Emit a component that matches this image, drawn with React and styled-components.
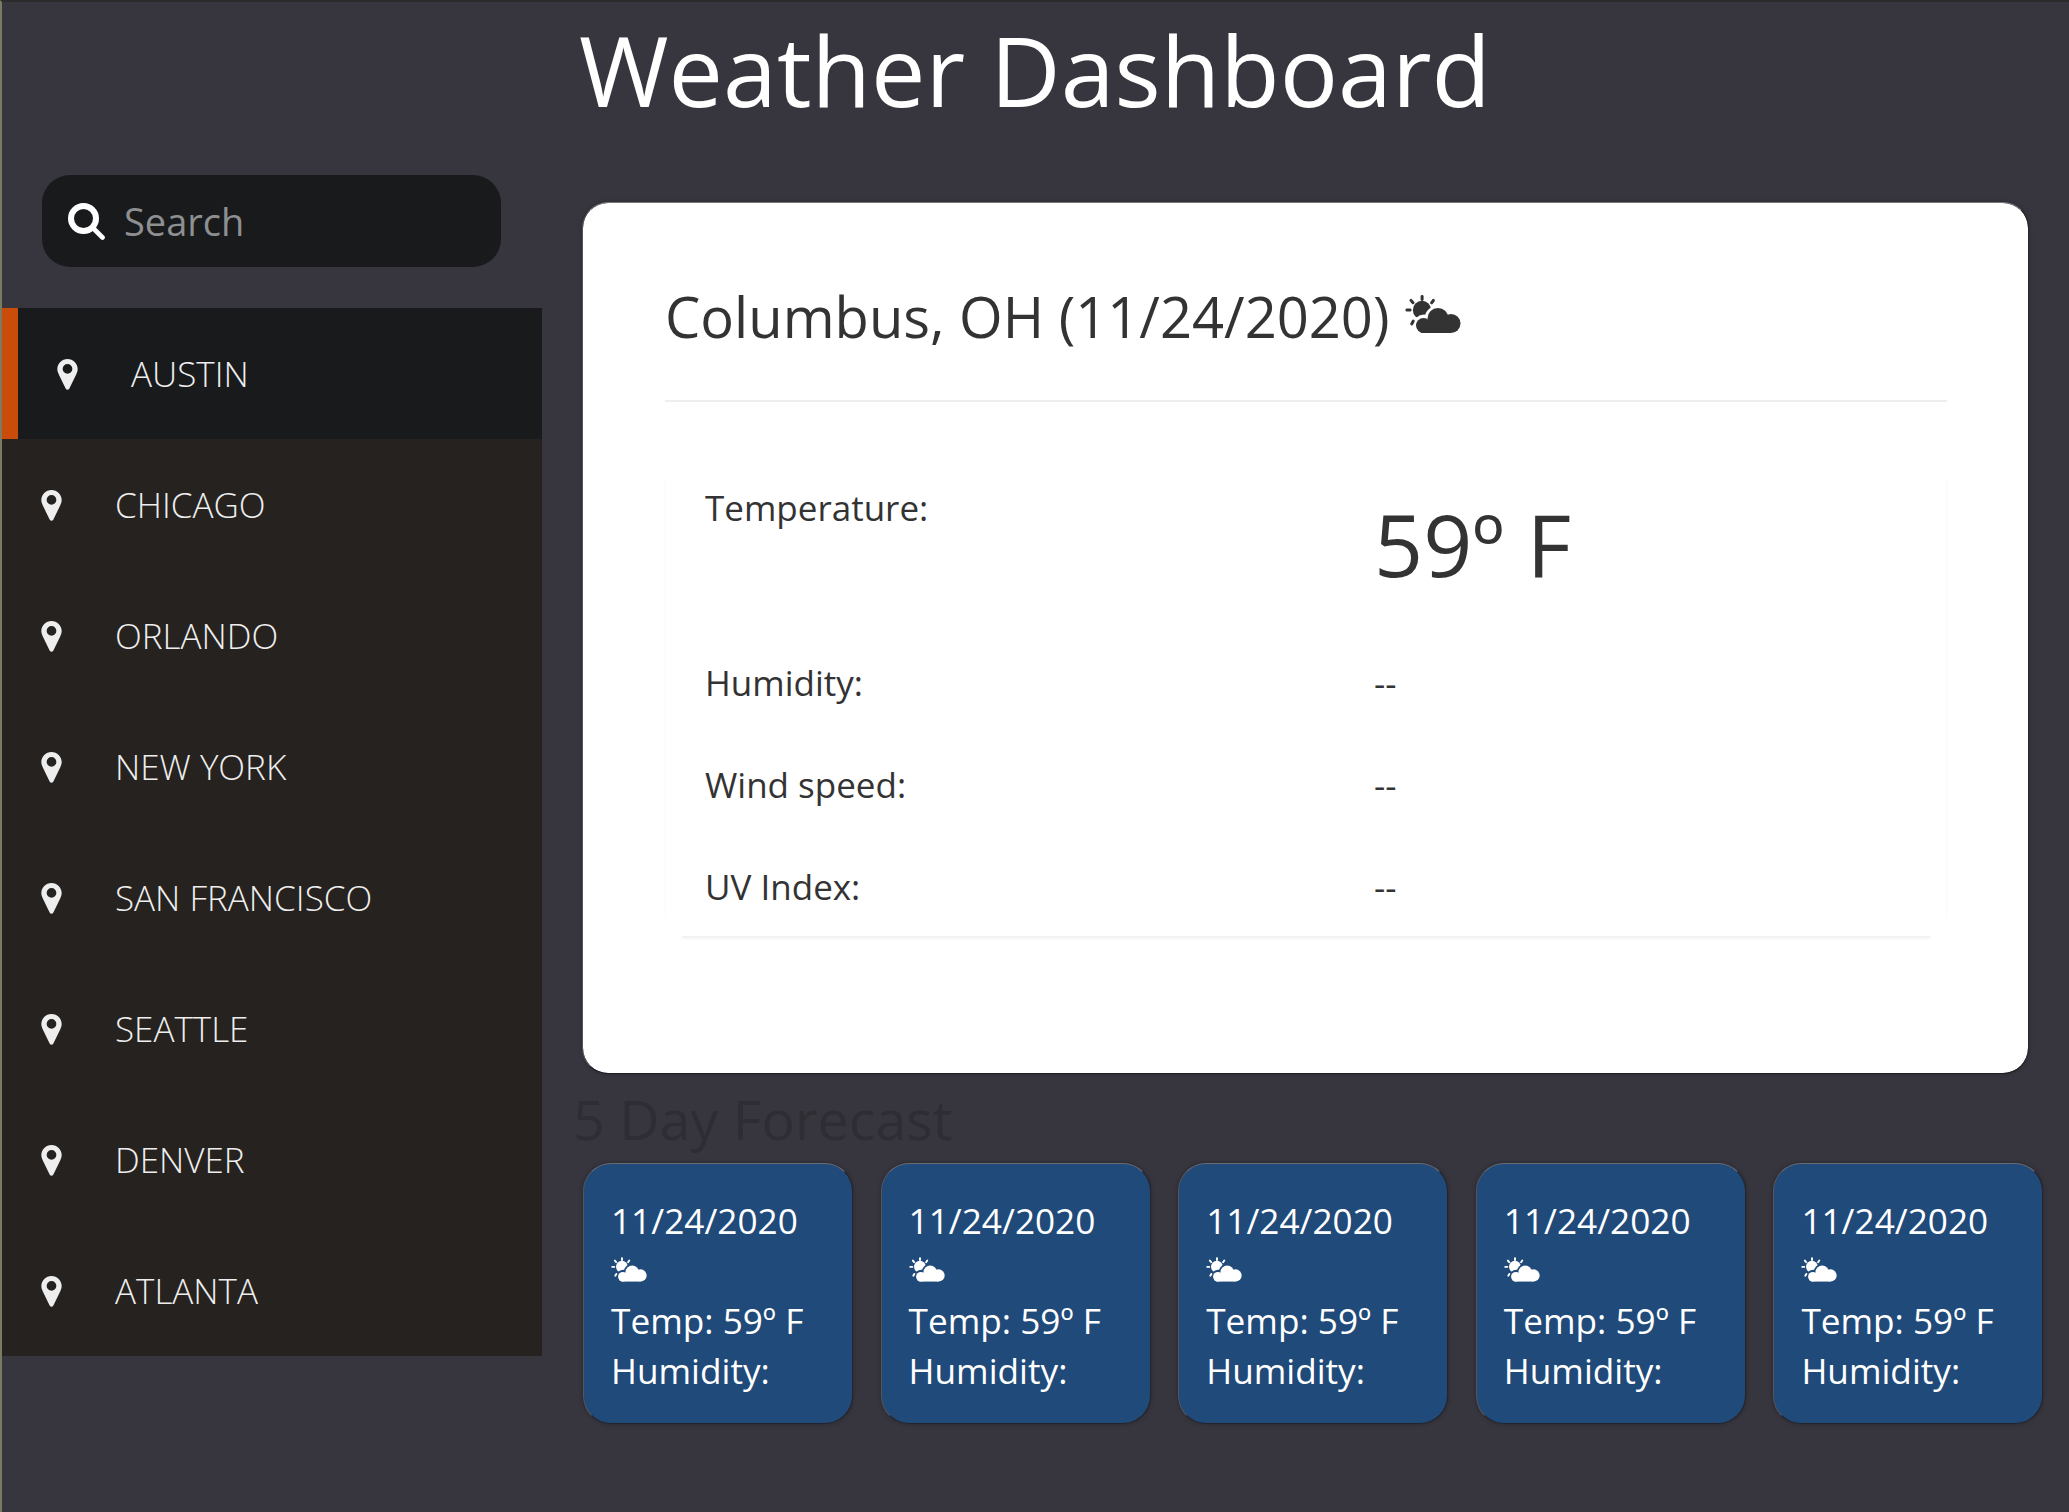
import React, { useId } from 'react';
import styled, { createGlobalStyle } from 'styled-components';

const cities = ['Austin', 'Chicago', 'Orlando', 'New York', 'San Francisco', 'Seattle', 'Denver', 'Atlanta'];
const details = ['Humidity:', 'Wind speed:', 'UV Index:'];
const forecast = [0, 1, 2, 3, 4];

// sun behind a cloud, the sun gets cut by a gap around the cloud
function CloudSun({ className }) {
    const maskId = useId();
    return (
        <svg className={className} viewBox="0 0 56 40" fill="currentColor" aria-hidden="true">
            <defs>
                <mask id={maskId}>
                    <rect width="56" height="40" fill="#fff" />
                    <circle cx="33" cy="24" r="13.5" fill="#000" />
                    <circle cx="19" cy="30" r="10.5" fill="#000" />
                </mask>
            </defs>
            <g mask={`url(#${maskId})`}>
                <circle cx="17" cy="15" r="9.2" />
            </g>
            <rect x="15.6" y="0" width="3" height="6" rx="1.4" />
            <rect x="0.5" y="13.6" width="6" height="3" rx="1.4" />
            <rect x="5.5" y="3.6" width="3" height="6" rx="1.4" transform="rotate(-40 7 6.6)" />
            <rect x="26" y="3.6" width="3" height="6" rx="1.4" transform="rotate(35 27.5 6.6)" />
            <rect x="6" y="24.5" width="3" height="6" rx="1.4" transform="rotate(30 7.5 27.5)" />
            <circle cx="33" cy="23.5" r="10.5" />
            <circle cx="46" cy="28.5" r="9.5" />
            <circle cx="18.5" cy="30.5" r="7.5" />
            <rect x="16" y="28" width="30" height="10" />
        </svg>
    );
}

function Pin({ className }) {
    return (
        <svg className={className} viewBox="0 0 21 32" aria-hidden="true">
            <path
                fill="#eee"
                fillRule="evenodd"
                d="M10.5 0C4.7 0 0 4.6 0 10.4c0 2 .6 3.5 1.4 5.3l7.3 15c.8 1.5 2.8 1.5 3.6 0l7.3-15c.8-1.8 1.4-3.3 1.4-5.3C21 4.6 16.3 0 10.5 0zm0 15.2a5 5 0 1 1 0-10 5 5 0 0 1 0 10z"
            />
        </svg>
    );
}

function SearchIcon({ className }) {
    return (
        <svg className={className} viewBox="0 0 37 37" fill="none" stroke="#fff" aria-hidden="true">
            <circle cx="15.5" cy="15.5" r="12.5" strokeWidth="6" />
            <path d="M25 25l9.5 9.5" strokeWidth="4.6" strokeLinecap="round" />
        </svg>
    );
}

export default function App() {
    return (
        <>
            <GlobalStyle />
            <Page>
                <Spacer />
                <Title>Weather Dashboard</Title>
                <Sidebar>
                    <SearchBox>
                        <SearchGlyph />
                        <SearchInput placeholder="Search" />
                    </SearchBox>
                    <CityList>
                        {cities.map((city, index) => (
                            <City key={city} $active={index === 0}>
                                <CityPin />
                                <CityName>{city}</CityName>
                            </City>
                        ))}
                    </CityList>
                </Sidebar>
                <Main>
                    <CurrentCard>
                        <CityHeading>
                            Columbus, OH (11/24/2020)
                            <HeadingIcon />
                        </CityHeading>
                        <Divider />
                        <StatsTable>
                            <Label>Temperature:</Label>
                            <BigValue>59º F</BigValue>
                            {details.map((label) => (
                                <React.Fragment key={label}>
                                    <Label>{label}</Label>
                                    <Value>--</Value>
                                </React.Fragment>
                            ))}
                        </StatsTable>
                        <TableFoot />
                    </CurrentCard>
                    <ForecastTitle>5 Day Forecast</ForecastTitle>
                    <ForecastRow>
                        {forecast.map((day) => (
                            <ForecastCard key={day}>
                                <ForecastLine>11/24/2020</ForecastLine>
                                <ForecastIconLine>
                                    <ForecastIcon />
                                </ForecastIconLine>
                                <ForecastLine>Temp: 59º F</ForecastLine>
                                <ForecastLine>Humidity:</ForecastLine>
                            </ForecastCard>
                        ))}
                    </ForecastRow>
                </Main>
            </Page>
        </>
    );
}

const GlobalStyle = createGlobalStyle`
    html, body {
        margin: 0;
        padding: 0;
        background-color: #37363f;
    }
    * {
        box-sizing: border-box;
    }
`;

const Page = styled.div`
    display: grid;
    grid-template-columns: 540px 1fr;
    grid-template-rows: 143px auto;
    column-gap: 40px;
    min-height: 1512px;
    align-content: start;
    overflow: hidden;
    border-top: 2px solid #2b2b2e;
    border-left: 2px solid #7d7a62;
    background-color: #37363f;
    font-family: "Open Sans", sans-serif;
`;

const Spacer = styled.div``;

const Title = styled.h1`
    margin: 2px 0 0 -3px;
    font-size: 97px;
    font-weight: 400;
    line-height: 130px;
    color: #fff;
`;

const Sidebar = styled.aside`
    padding-top: 30px;
`;

const SearchBox = styled.div`
    display: flex;
    align-items: center;
    width: 459px;
    height: 92px;
    margin: 0 0 41px 40px;
    padding-left: 26px;
    border-radius: 28px;
    background-color: #191a1c;
`;

const SearchGlyph = styled(SearchIcon)`
    flex: none;
    width: 37px;
    height: 37px;
`;

const SearchInput = styled.input`
    flex: 1;
    min-width: 0;
    margin-left: 19px;
    padding: 0;
    border: none;
    outline: none;
    background: transparent;
    font-family: inherit;
    font-size: 38px;
    color: #fff;
    &::placeholder {
        color: #8d8f91;
        opacity: 1;
    }
`;

const CityList = styled.ul`
    margin: 0;
    padding: 0;
    list-style: none;
`;

const City = styled.li`
    display: flex;
    align-items: center;
    height: 131px;
    padding-left: 39px;
    border-left: ${(props) => (props.$active ? '16px solid #c94c0a' : 'none')};
    background-color: ${(props) => (props.$active ? '#191a1c' : '#26221f')};
`;

const CityPin = styled(Pin)`
    flex: none;
    width: 21px;
    height: 31px;
    margin-top: 2px;
`;

const CityName = styled.span`
    margin-left: 53px;
    font-size: 35px;
    font-weight: 300;
    text-transform: uppercase;
    color: #eee;
`;

const Main = styled.main`
    min-width: 0;
    padding-top: 57px;
`;

const CurrentCard = styled.section`
    width: 1447px;
    height: 872px;
    padding: 77px 81px 0 82px;
    border: 1px solid;
    border-color: #77777c #26262b #1f1f24 #55555c;
    border-radius: 26px;
    background-color: #fff;
    background-clip: padding-box;
    box-shadow: 0 0 4px rgba(0, 0, 0, 0.25);
    color: #333;
`;

const CityHeading = styled.h2`
    display: flex;
    align-items: center;
    margin: 0;
    font-size: 56.1px;
    font-weight: 400;
    line-height: 72px;
`;

const HeadingIcon = styled(CloudSun)`
    width: 56px;
    height: 40px;
    margin: -2px 0 0 16px;
`;

const Divider = styled.hr`
    height: 2px;
    margin: 48px 0 78px;
    border: none;
    background-color: #eee;
`;

const StatsTable = styled.div`
    display: grid;
    grid-template-columns: 669px 1fr;
    grid-template-rows: 129px repeat(3, 56px);
    row-gap: 46px;
    height: 438px;
    padding-left: 39px;
    border-left: 1px solid #fafafa;
    border-right: 1px solid #fafafa;
`;

const TableFoot = styled.div`
    height: 2px;
    margin: 18px 17px 0;
    background-color: #f3f3f3;
    box-shadow: 0 1px 3px rgba(0, 0, 0, 0.05);
`;

const Label = styled.div`
    font-size: 35px;
    line-height: 56px;
`;

const Value = styled.div`
    font-size: 35px;
    line-height: 56px;
`;

const BigValue = styled.div`
    margin-top: 6px;
    font-size: 86px;
    line-height: 116px;
`;

const ForecastTitle = styled.h3`
    margin: 9px 0 8px -9px;
    font-size: 55.6px;
    font-weight: 400;
    line-height: 72px;
    color: #2e2d34;
`;

const ForecastRow = styled.div`
    display: flex;
    gap: 27.6px;
    margin-left: 1px;
`;

const ForecastCard = styled.article`
    flex: none;
    width: 270px;
    height: 261px;
    padding: 31px 0 0 27px;
    border: 1px solid;
    border-color: #6a6a72 #24242a #24242a #55555c;
    border-radius: 28px;
    background-color: #204a79;
    box-shadow: 0 0 4px rgba(0, 0, 0, 0.3);
    color: #fff;
`;

const ForecastLine = styled.div`
    font-size: 35.2px;
    line-height: 50px;
`;

const ForecastIconLine = styled.div`
    display: flex;
    align-items: center;
    height: 50px;
`;

const ForecastIcon = styled(CloudSun)`
    width: 36px;
    height: 26px;
`;
